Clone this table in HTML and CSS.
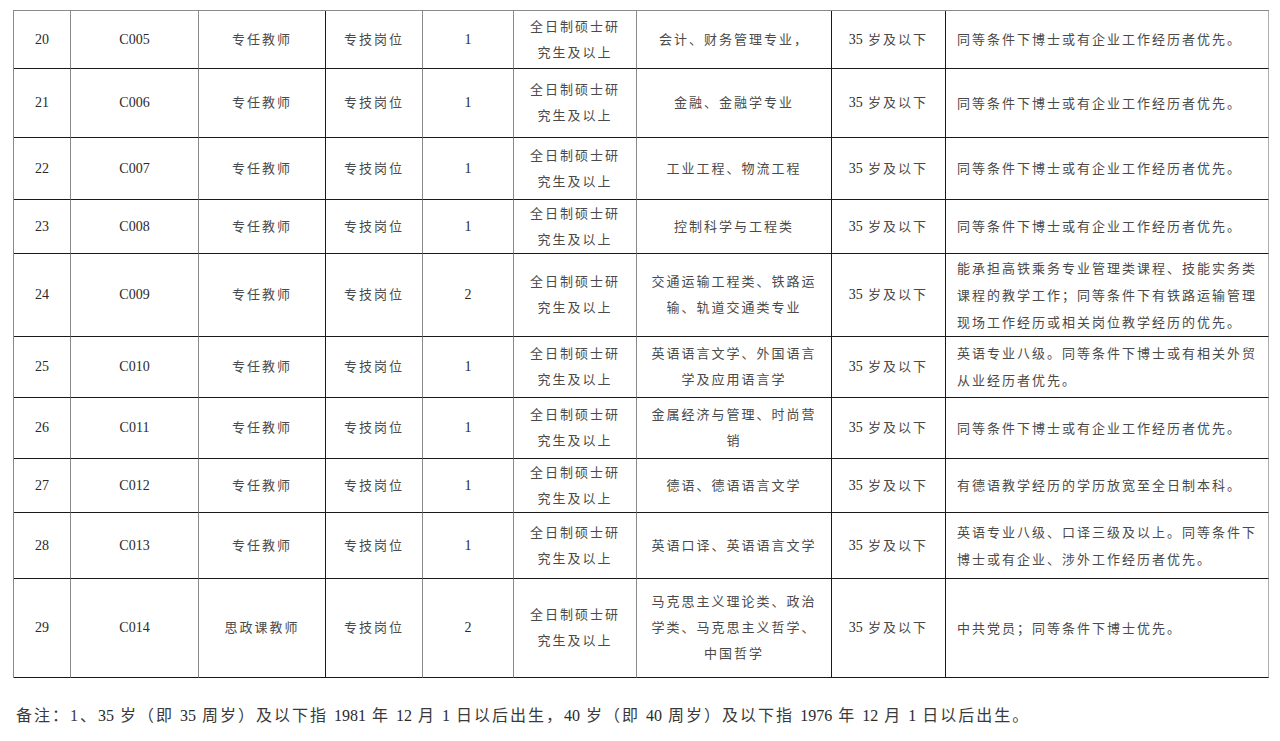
FILE: index.html
```html
<!DOCTYPE html>
<html lang="zh-CN">
<head>
<meta charset="utf-8">
<title>招聘岗位表</title>
<link rel="stylesheet" href="styles.css">
</head>
<body>
<div class="page">
<table class="jobs">
<colgroup>
<col class="c1"><col class="c2"><col class="c3"><col class="c4"><col class="c5"><col class="c6"><col class="c7"><col class="c8"><col class="c9">
</colgroup>
<tbody>
<tr class="r20"><td class="num">20</td><td class="num">C005</td><td>专任教师</td><td>专技岗位</td><td class="num">1</td><td>全日制硕士研<br>究生及以上</td><td>会计、财务管理专业，</td><td><span class="n">35</span> 岁及以下</td><td class="note">同等条件下博士或有企业工作经历者优先。</td></tr>
<tr class="r21"><td class="num">21</td><td class="num">C006</td><td>专任教师</td><td>专技岗位</td><td class="num">1</td><td>全日制硕士研<br>究生及以上</td><td>金融、金融学专业</td><td><span class="n">35</span> 岁及以下</td><td class="note">同等条件下博士或有企业工作经历者优先。</td></tr>
<tr class="r22"><td class="num">22</td><td class="num">C007</td><td>专任教师</td><td>专技岗位</td><td class="num">1</td><td>全日制硕士研<br>究生及以上</td><td>工业工程、物流工程</td><td><span class="n">35</span> 岁及以下</td><td class="note">同等条件下博士或有企业工作经历者优先。</td></tr>
<tr class="r23"><td class="num">23</td><td class="num">C008</td><td>专任教师</td><td>专技岗位</td><td class="num">1</td><td>全日制硕士研<br>究生及以上</td><td>控制科学与工程类</td><td><span class="n">35</span> 岁及以下</td><td class="note">同等条件下博士或有企业工作经历者优先。</td></tr>
<tr class="r24"><td class="num">24</td><td class="num">C009</td><td>专任教师</td><td>专技岗位</td><td class="num">2</td><td>全日制硕士研<br>究生及以上</td><td>交通运输工程类、铁路运<br>输、轨道交通类专业</td><td><span class="n">35</span> 岁及以下</td><td class="note">能承担高铁乘务专业管理类课程、技能实务类<br>课程的教学工作；同等条件下有铁路运输管理<br>现场工作经历或相关岗位教学经历的优先。</td></tr>
<tr class="r25"><td class="num">25</td><td class="num">C010</td><td>专任教师</td><td>专技岗位</td><td class="num">1</td><td>全日制硕士研<br>究生及以上</td><td>英语语言文学、外国语言<br>学及应用语言学</td><td><span class="n">35</span> 岁及以下</td><td class="note">英语专业八级。同等条件下博士或有相关外贸<br>从业经历者优先。</td></tr>
<tr class="r26"><td class="num">26</td><td class="num">C011</td><td>专任教师</td><td>专技岗位</td><td class="num">1</td><td>全日制硕士研<br>究生及以上</td><td>金属经济与管理、时尚营<br>销</td><td><span class="n">35</span> 岁及以下</td><td class="note">同等条件下博士或有企业工作经历者优先。</td></tr>
<tr class="r27"><td class="num">27</td><td class="num">C012</td><td>专任教师</td><td>专技岗位</td><td class="num">1</td><td>全日制硕士研<br>究生及以上</td><td>德语、德语语言文学</td><td><span class="n">35</span> 岁及以下</td><td class="note">有德语教学经历的学历放宽至全日制本科。</td></tr>
<tr class="r28"><td class="num">28</td><td class="num">C013</td><td>专任教师</td><td>专技岗位</td><td class="num">1</td><td>全日制硕士研<br>究生及以上</td><td>英语口译、英语语言文学</td><td><span class="n">35</span> 岁及以下</td><td class="note">英语专业八级、口译三级及以上。同等条件下<br>博士或有企业、涉外工作经历者优先。</td></tr>
<tr class="r29"><td class="num">29</td><td class="num">C014</td><td>思政课教师</td><td>专技岗位</td><td class="num">2</td><td>全日制硕士研<br>究生及以上</td><td>马克思主义理论类、政治<br>学类、马克思主义哲学、<br>中国哲学</td><td><span class="n">35</span> 岁及以下</td><td class="note">中共党员；同等条件下博士优先。</td></tr>
</tbody>
</table>
<p class="remark">备注：1、<span class="n">35</span> 岁（即 <span class="n">35</span> 周岁）及以下指 <span class="n">1981</span> 年 <span class="n">12</span> 月 <span class="n">1</span> 日以后出生，<span class="n">40</span> 岁（即 <span class="n">40</span> 周岁）及以下指 <span class="n">1976</span> 年 <span class="n">12</span> 月 <span class="n">1</span> 日以后出生。</p>
</div>
</body>
</html>
```

FILE: styles.css
```css
html, body {
  margin: 0;
  padding: 0;
  background: #fff;
}

.page {
  padding: 10px 0 0 13px;
  font-family: "Liberation Serif", "Noto Sans CJK SC", serif;
  color: #4a4a4a;
}

.jobs {
  width: 1256px;
  table-layout: fixed;
  border-collapse: separate;
  border-spacing: 0;
  border-left: 1px solid #8a8a8a;
  border-top: 1px solid #8a8a8a;
}

.c1 { width: 57px; }
.c2 { width: 128px; }
.c3 { width: 127px; }
.c4 { width: 97px; }
.c5 { width: 91px; }
.c6 { width: 123px; }
.c7 { width: 195px; }
.c8 { width: 114px; }
.c9 { width: 323px; }

.jobs td {
  padding: 0;
  text-align: center;
  vertical-align: middle;
  font-size: 13px;
  letter-spacing: 2px;
  line-height: 26px;
  border-right: 1px solid #8a8a8a;
  border-bottom: 1.5px solid #1a1a1a;
  white-space: nowrap;
}

.jobs td:nth-child(3),
.jobs td:nth-child(7),
.jobs td:nth-child(8) {
  border-right-color: #1a1a1a;
}

.jobs td:nth-child(9) {
  border-right-color: #b0b0b0;
}

.jobs td.num,
.n {
  font-family: "Liberation Serif", serif;
  font-size: 14px;
  letter-spacing: 0;
  color: #2a2a2a;
}

.jobs td.note {
  text-align: left;
  padding-left: 11px;
  line-height: 27px;
}

.r20 { height: 58px; }
.r21 { height: 69px; }
.r22 { height: 62px; }
.r23 { height: 54px; }
.r24 { height: 83px; }
.r25 { height: 61px; }
.r26 { height: 61px; }
.r27 { height: 54px; }
.r28 { height: 66px; }
.r29 { height: 99px; }

.remark {
  margin: 27px 0 0 3px;
  font-size: 16px;
  letter-spacing: 2px;
  line-height: 22px;
  color: #3a3a3a;
}

.remark .n {
  font-size: 16px;
  color: #2a2a2a;
}
```
